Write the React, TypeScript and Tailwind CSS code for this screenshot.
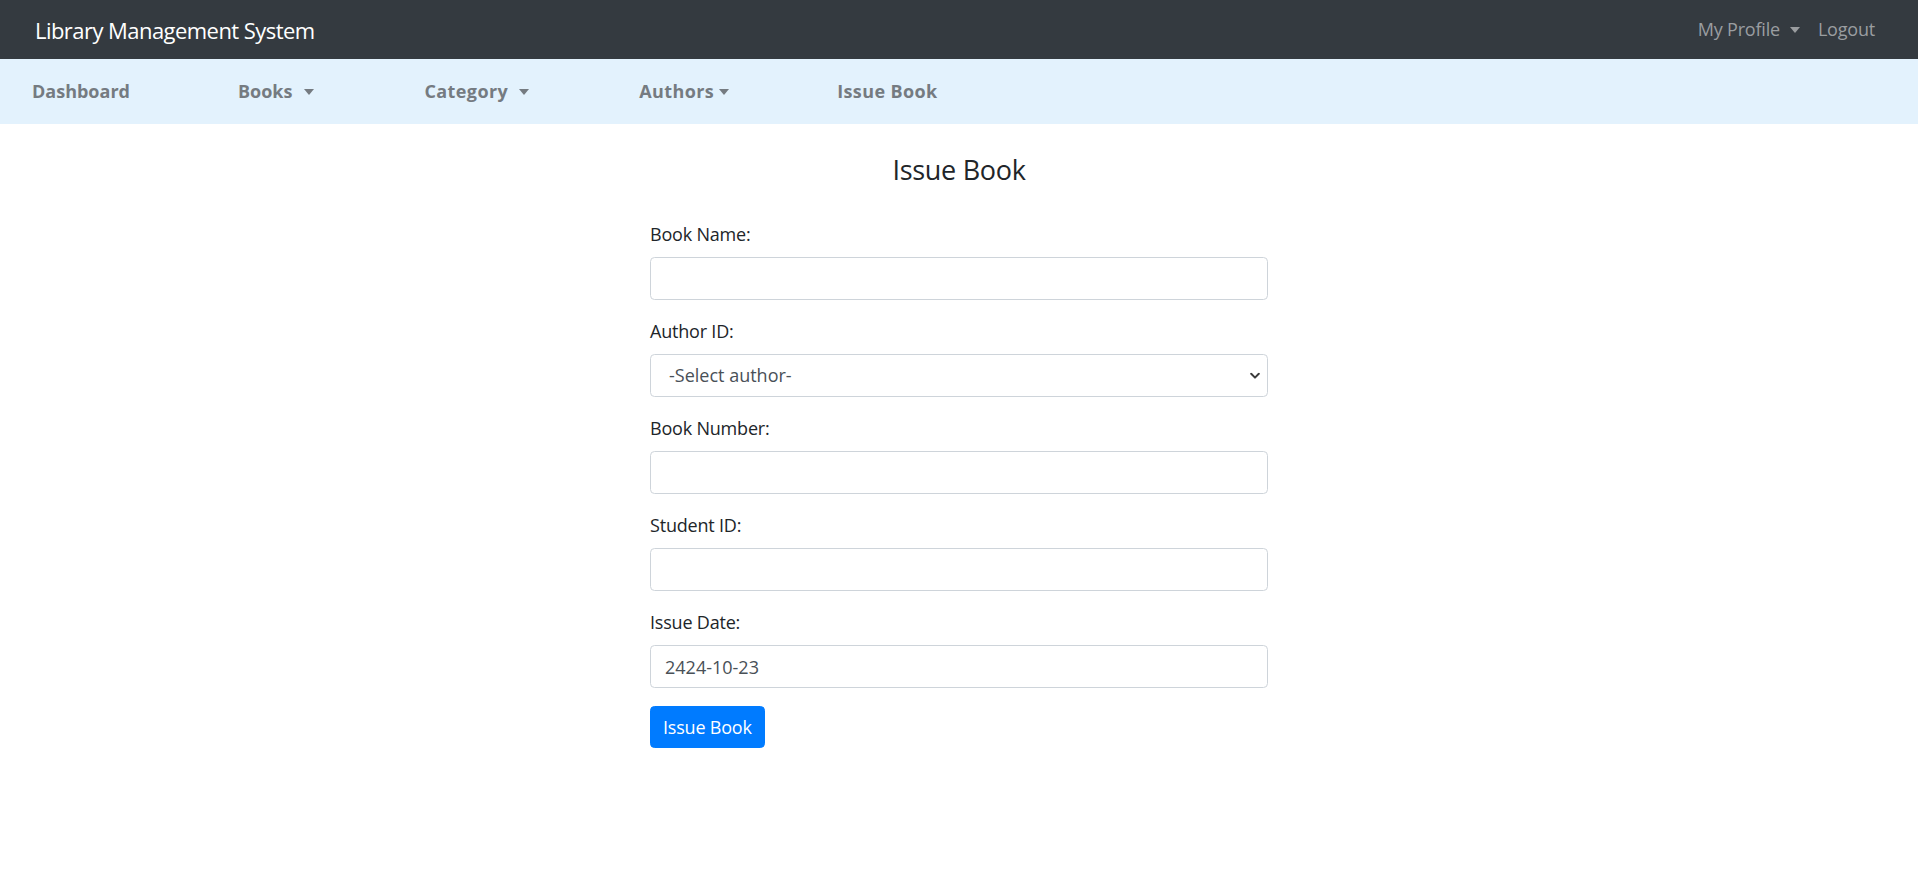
import React from "react";

function Caret({ className = "" }: { className?: string }) {
  return (
    <span
      className={`inline-block w-0 h-0 border-t-[6px] border-x-[5.5px] border-x-transparent border-t-current ${className}`}
    />
  );
}

function Field({ label, value = "" }: { label: string; value?: string }) {
  return (
    <div className="mb-[18.5px]">
      <label className="block mb-[9px] text-[18px] leading-[27px] text-[#212529] tracking-[-0.2px]">{label}</label>
      <input
        type="text"
        defaultValue={value}
        className="block w-full h-[42.5px] px-[14px] border border-[#ced4da] rounded-[4.5px] bg-white text-[18px] text-[#495057] outline-none"
      />
    </div>
  );
}

export default function App() {
  return (
    <div className="min-h-screen bg-white font-['Segoe_UI','Open_Sans',sans-serif]">
      <nav className="h-[59px] bg-[#343a40] flex items-center justify-between pl-[35px] pr-[43px]">
        <span className="text-[22px] tracking-[-0.55px] text-white leading-none">Library Management System</span>
        <div className="flex items-center text-[18px] text-[#9a9da0] tracking-[-0.2px]">
          <span className="flex items-center">
            My Profile
            <Caret className="ml-[10px]" />
          </span>
          <span className="ml-[18px]">Logout</span>
        </div>
      </nav>
      <div className="h-[65px] bg-[#e3f2fd] flex items-center pl-[32px] text-[18px] font-bold text-[#757b81]">
        <span>Dashboard</span>
        <span className="flex items-center ml-[108px]">
          Books
          <Caret className="ml-[12px]" />
        </span>
        <span className="flex items-center ml-[110px] tracking-[0.4px]">
          Category
          <Caret className="ml-[11px]" />
        </span>
        <span className="flex items-center ml-[110px] tracking-[0.4px]">
          Authors
          <Caret className="ml-[5px]" />
        </span>
        <span className="ml-[108px] tracking-[0.4px]">Issue Book</span>
      </div>
      <main className="flex flex-col items-center">
        <h4 className="mt-[30px] text-[27px] font-medium leading-[1.2] text-[#212529] tracking-[-0.3px]">Issue Book</h4>
        <form className="w-[618px] mt-[35px]" onSubmit={(e) => e.preventDefault()}>
          <Field label="Book Name:" />
          <div className="mb-[18.5px]">
            <label className="block mb-[9px] text-[18px] leading-[27px] text-[#212529] tracking-[-0.2px]">Author ID:</label>
            <div className="relative">
              <select
                defaultValue=""
                className="block w-full h-[42.5px] pl-[18px] pr-[30px] border border-[#ced4da] rounded-[4.5px] bg-white text-[18px] text-[#495057] appearance-none outline-none"
              >
                <option value="">-Select author-</option>
              </select>
              <svg
                className="absolute right-[8px] top-1/2 -translate-y-1/2 pointer-events-none"
                width="10"
                height="7"
                viewBox="0 0 10 7"
                fill="none"
              >
                <path d="M1.2 1.3 L5 5.1 L8.8 1.3" stroke="#3b3b3b" strokeWidth="2" strokeLinecap="round" strokeLinejoin="round" />
              </svg>
            </div>
          </div>
          <Field label="Book Number:" />
          <Field label="Student ID:" />
          <Field label="Issue Date:" value="2424-10-23" />
          <button
            type="submit"
            className="h-[42px] px-[12px] bg-[#007bff] text-white text-[18px] tracking-[-0.2px] rounded-[4.5px] border border-[#007bff]"
          >
            Issue Book
          </button>
        </form>
      </main>
    </div>
  );
}
